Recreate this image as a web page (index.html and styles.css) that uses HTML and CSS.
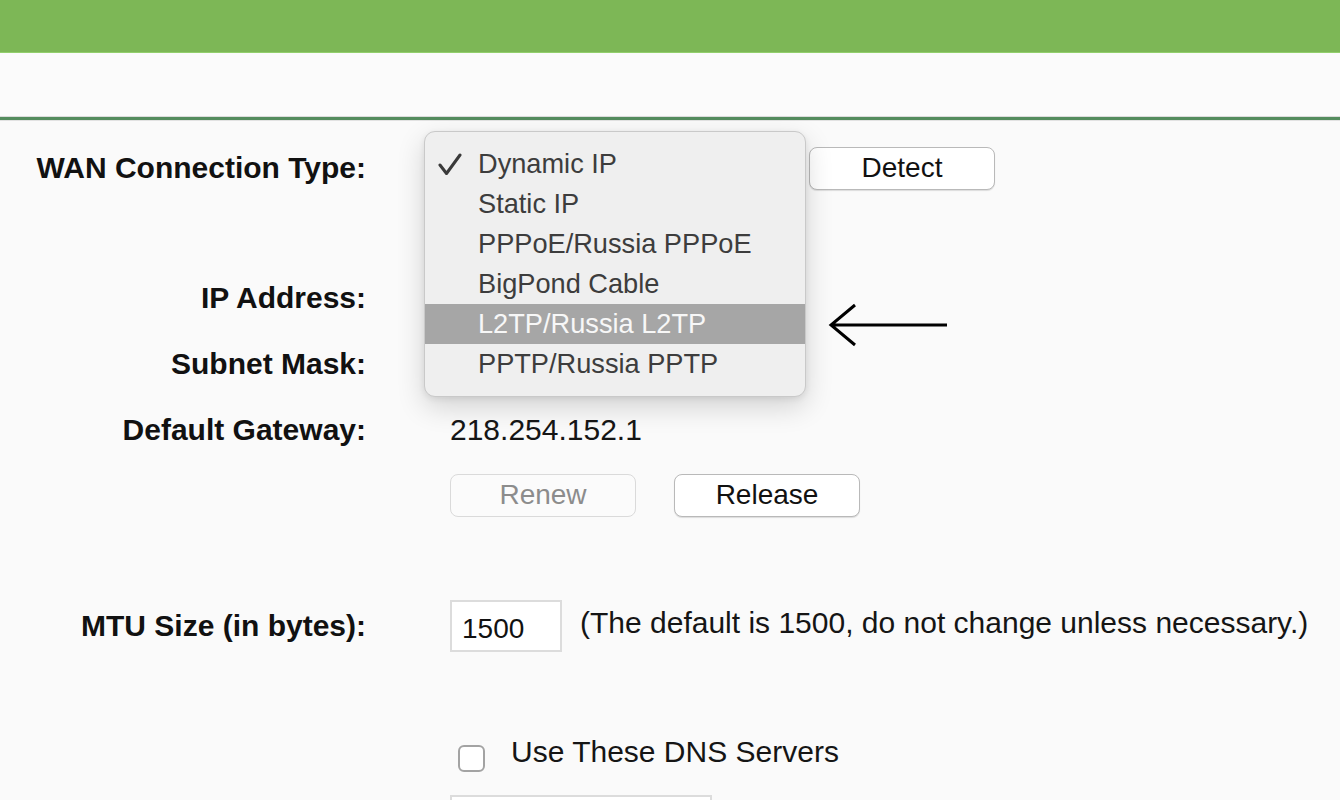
FILE: index.html
```html
<!DOCTYPE html>
<html lang="en">
<head>
    <meta charset="UTF-8">
    <meta name="viewport" content="width=device-width, initial-scale=1.0">
    <title>WAN</title>
    <link rel="stylesheet" href="styles.css">
</head>
<body>
    <div class="topbar"></div>
    <div class="subbar"></div>
    <div class="divider"></div>

    <div class="form">
        <div class="row row-wan">
            <div class="label">WAN Connection Type:</div>
            <div class="value">
                <div class="select-box"></div>
                <button class="btn">Detect</button>

                <!-- opened native popup -->
                <div class="popup">
                    <div class="option">
                        <svg class="check" width="26" height="24" viewBox="0 0 26 24">
                            <path d="M2 12 L8.5 20.5 L22 2" fill="none" stroke="#3a3a3a" stroke-width="3" stroke-linecap="round" stroke-linejoin="round"/>
                        </svg>
                        Dynamic IP
                    </div>
                    <div class="option">Static IP</div>
                    <div class="option">PPPoE/Russia PPPoE</div>
                    <div class="option">BigPond Cable</div>
                    <div class="option selected">L2TP/Russia L2TP</div>
                    <div class="option">PPTP/Russia PPTP</div>

                    <svg class="pointer" width="124" height="46" viewBox="0 0 124 46">
                        <path d="M4 23 H120 M28 3 L4 23 L28 43" fill="none" stroke="#000" stroke-width="3"/>
                    </svg>
                </div>
            </div>
        </div>

        <div class="row row-ip">
            <div class="label">IP Address:</div>
            <div class="value"></div>
        </div>

        <div class="row row-line">
            <div class="label">Subnet Mask:</div>
            <div class="value"></div>
        </div>

        <div class="row row-line">
            <div class="label">Default Gateway:</div>
            <div class="value">218.254.152.1</div>
        </div>

        <div class="row row-buttons">
            <div class="label"></div>
            <div class="value">
                <button class="btn" disabled>Renew</button>
                <button class="btn">Release</button>
            </div>
        </div>

        <div class="row row-mtu">
            <div class="label">MTU Size (in bytes):</div>
            <div class="value">
                <input class="text-input mtu" type="text" value="1500">
                <span class="note">(The default is 1500, do not change unless necessary.)</span>
            </div>
        </div>

        <div class="row row-dns">
            <div class="label"></div>
            <div class="value">
                <span class="checkbox"></span>
                <span class="check-label">Use These DNS Servers</span>
            </div>
        </div>

        <div class="row row-last">
            <div class="label"></div>
            <div class="value">
                <div class="text-input dns"></div>
            </div>
        </div>
    </div>
</body>
</html>
```

FILE: styles.css
```css
body {
    margin: 0;
    background: #fafafa;
    font-family: "Liberation Sans", Arial, sans-serif;
    color: #151515;
    overflow: hidden;
    height: 800px;
}
.topbar {
    height: 52px;
    background: #7db756;
    border-bottom: 1px solid #92cf6c;
}
.subbar {
    height: 63px;
    background: #fbfbfb;
    border-bottom: 1px solid #dcdcdc;
}
.divider {
    height: 3px;
    background: #548c5e;
    border-bottom: 1px solid #e2e2e2;
}
.form {
    display: flex;
    flex-direction: column;
}
.row {
    display: grid;
    grid-template-columns: 366px 1fr;
    column-gap: 84px;
    align-items: center;
    height: 44px;
    font-size: 30px;
}
.row-wan { margin-top: 25px; }
.row-ip { margin-top: 86px; }
.row-line { margin-top: 22px; }
.row-buttons { margin-top: 21px; }
.row-mtu { margin-top: 83px; height: 52px; }
.row-dns { margin-top: 78px; }
.row-last { margin-top: 19px; align-items: start; }
.label {
    text-align: right;
    font-weight: bold;
    color: #111;
}
.value {
    display: flex;
    align-items: center;
    position: relative;
    height: 100%;
}
.select-box {
    width: 345px;
    height: 42px;
    margin-right: 14px;
}
.btn {
    width: 186px;
    height: 43px;
    background: #fff;
    border: 1px solid #b9b9b9;
    border-radius: 8px;
    box-shadow: 0 1px 1px rgba(0,0,0,0.12);
    font-family: "Liberation Sans", Arial, sans-serif;
    font-size: 28px;
    color: #111;
    padding: 0;
    margin-right: 38px;
}
.btn:disabled {
    background: #fbfbfb;
    border-color: #dadada;
    color: #8c8c8c;
    box-shadow: none;
}
.popup {
    position: absolute;
    left: -26px;
    top: -15px;
    width: 380px;
    padding: 12px 0;
    background: #efefef;
    border: 1px solid #c9c9c9;
    border-radius: 11px;
    box-shadow: 0 10px 28px rgba(0,0,0,0.16), 0 2px 6px rgba(0,0,0,0.08);
}
.option {
    position: relative;
    height: 40px;
    line-height: 40px;
    padding-left: 53px;
    font-size: 27.2px;
    color: #3d3d3d;
}
.option.selected {
    background: #a6a6a6;
    color: #f7f7f7;
}
.check {
    position: absolute;
    left: 13px;
    top: 9px;
}
.pointer {
    position: absolute;
    left: 402px;
    top: 170px;
}
.text-input {
    background: #fff;
    border: 2px solid #dcdcdc;
    box-sizing: border-box;
}
.mtu {
    width: 112px;
    height: 52px;
    font-family: "Liberation Sans", Arial, sans-serif;
    font-size: 28px;
    color: #111;
    padding: 6px 0 0 10px;
    margin-right: 18px;
    outline: none;
}
.note {
    margin-top: -6px;
}
.checkbox {
    width: 27px;
    height: 27px;
    box-sizing: border-box;
    margin-left: 8px;
    margin-top: 12px;
    border: 2px solid #a3a3a3;
    border-radius: 6px;
    background: #fff;
}
.check-label {
    margin-left: 26px;
}
.dns {
    width: 262px;
    height: 40px;
}
```
